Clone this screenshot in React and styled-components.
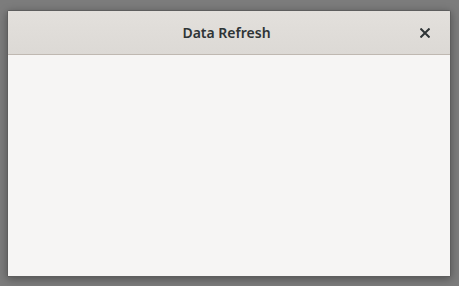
import styled, { createGlobalStyle } from "styled-components"

const Global = createGlobalStyle`
  html, body {
    margin: 0;
    padding: 0;
    width: 100%;
    height: 100%;
    background: #7c7c7c;
    font-family: "Noto Sans", "DejaVu Sans", sans-serif;
  }
  #root {
    width: 100%;
    height: 100%;
  }
`

const Screen = styled.div`
  width: 459px;
  height: 286px;
  padding: 10px 8px 9px 7px;
  box-sizing: border-box;
  display: flex;
`

const Window = styled.div`
  flex: 1;
  display: flex;
  flex-direction: column;
  background: #f6f5f4;
  border: 1px solid #5e5e5e;
  border-radius: 2px 2px 0 0;
  box-shadow: 0 2px 8px rgba(0, 0, 0, 0.35);
  overflow: hidden;
`

const HeaderBar = styled.div`
  height: 43px;
  flex-shrink: 0;
  display: grid;
  grid-template-columns: 1fr auto 1fr;
  align-items: center;
  background: linear-gradient(#e3e0dc, #dcd9d5);
  border-bottom: 1px solid #bfb8b1;
  padding: 0 13px 0 12px;
`

const Title = styled.div`
  grid-column: 2;
  font-size: 14px;
  font-weight: 600;
  color: #2e3436;
  margin-right: 4px;
`

const CloseButton = styled.button`
  justify-self: end;
  width: 24px;
  height: 24px;
  padding: 0;
  border: none;
  background: none;
  display: flex;
  align-items: center;
  justify-content: center;
  cursor: pointer;
`

const Content = styled.div`
  flex: 1;
  background: #f6f5f4;
`

const App = () => {
  return (
    <>
      <Global />
      <Screen>
        <Window>
          <HeaderBar>
            <Title>Data Refresh</Title>
            <CloseButton aria-label="Close">
              <svg width="10" height="10" viewBox="0 0 10 10">
                <path d="M1.2 1.2 L8.8 8.8 M8.8 1.2 L1.2 8.8" stroke="#2e3436" strokeWidth="2" strokeLinecap="square" />
              </svg>
            </CloseButton>
          </HeaderBar>
          <Content />
        </Window>
      </Screen>
    </>
  )
}

export default App
